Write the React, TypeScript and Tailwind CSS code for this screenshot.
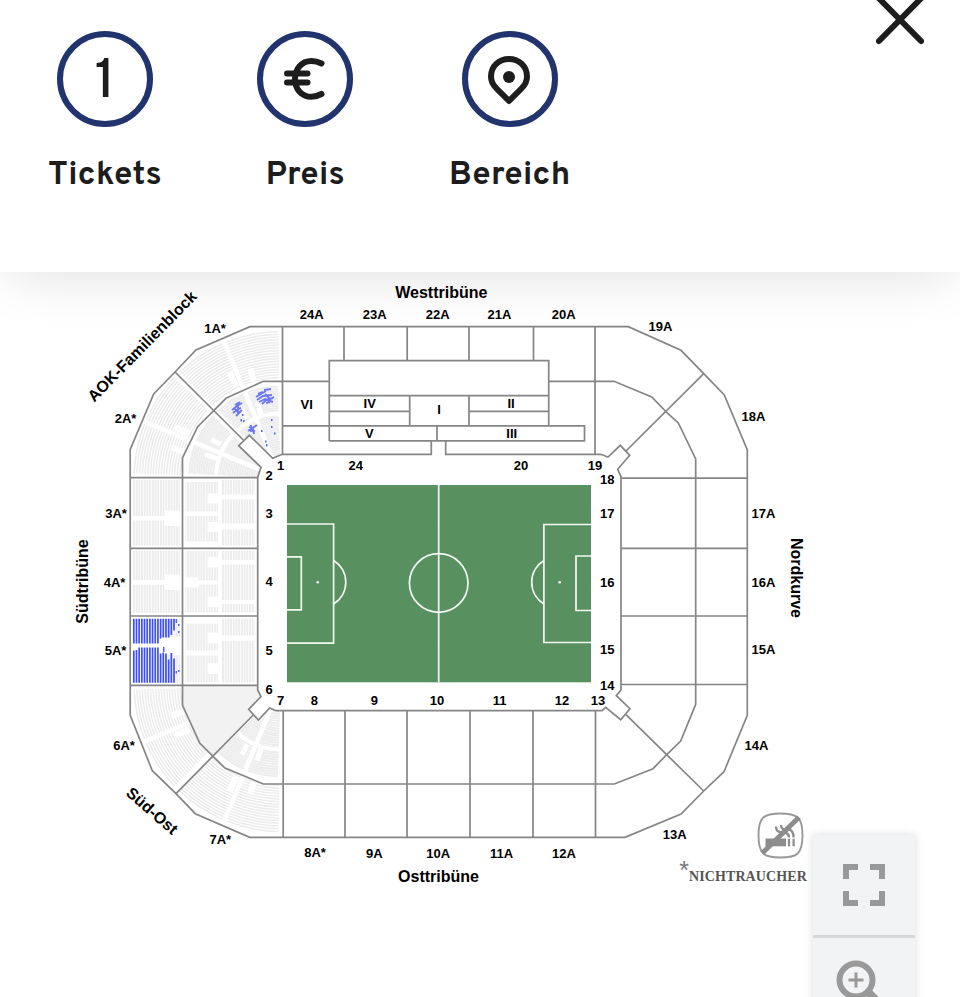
import type { ReactNode } from 'react';

type Label = { text: string; x: number; y: number; rotate?: number };
type Block = [x1: number, y1: number, x2: number, y2: number];

const titles: Label[] = [
  { text: 'Westtribüne', x: 441.3, y: 297.7 },
  { text: 'Osttribüne', x: 438.5, y: 881.7 },
  { text: 'Südtribüne', x: 88.3, y: 581.5, rotate: -90 },
  { text: 'Nordkurve', x: 791, y: 578, rotate: 90 },
  { text: 'AOK-Familienblock', x: 146, y: 350, rotate: -45.5 },
  { text: 'Süd-Ost', x: 148.5, y: 815, rotate: 41 },
];

const labels: Label[] = [
  { text: '24A', x: 311.7, y: 318.5 },
  { text: '23A', x: 374.7, y: 318.5 },
  { text: '22A', x: 437.7, y: 318.5 },
  { text: '21A', x: 499.5, y: 318.5 },
  { text: '20A', x: 563.7, y: 318.5 },
  { text: '19A', x: 660.5, y: 330.5 },
  { text: '18A', x: 753.5, y: 421 },
  { text: '17A', x: 763.5, y: 517.5 },
  { text: '16A', x: 763.5, y: 586.5 },
  { text: '15A', x: 763.5, y: 653.5 },
  { text: '14A', x: 756.5, y: 750 },
  { text: '13A', x: 674.7, y: 838.5 },
  { text: '12A', x: 564, y: 857.5 },
  { text: '11A', x: 501.5, y: 857.5 },
  { text: '10A', x: 438.3, y: 857.5 },
  { text: '9A', x: 374.3, y: 857.5 },
  { text: '8A*', x: 315, y: 857 },
  { text: '7A*', x: 220.3, y: 843.5 },
  { text: '6A*', x: 124, y: 749.5 },
  { text: '5A*', x: 115.5, y: 654.5 },
  { text: '4A*', x: 114.5, y: 586.5 },
  { text: '3A*', x: 116, y: 517.5 },
  { text: '2A*', x: 125.5, y: 422.5 },
  { text: '1A*', x: 215, y: 333 },
  { text: 'VI', x: 306.7, y: 409 },
  { text: 'IV', x: 369.7, y: 408 },
  { text: 'I', x: 439, y: 414 },
  { text: 'II', x: 511, y: 408 },
  { text: 'V', x: 369.3, y: 437.5 },
  { text: 'III', x: 511.7, y: 437.5 },
  { text: '1', x: 280.5, y: 470 },
  { text: '24', x: 355.7, y: 470 },
  { text: '20', x: 521, y: 470 },
  { text: '19', x: 595, y: 470 },
  { text: '2', x: 269, y: 479.5 },
  { text: '3', x: 269, y: 517.5 },
  { text: '4', x: 269, y: 586 },
  { text: '5', x: 269, y: 655 },
  { text: '6', x: 269, y: 693.5 },
  { text: '7', x: 280.5, y: 705 },
  { text: '8', x: 314.3, y: 705 },
  { text: '9', x: 374.3, y: 705 },
  { text: '10', x: 437, y: 705 },
  { text: '11', x: 499.5, y: 705 },
  { text: '12', x: 562, y: 705 },
  { text: '13', x: 598, y: 705 },
  { text: '14', x: 607.3, y: 689.5 },
  { text: '15', x: 607.3, y: 653.5 },
  { text: '16', x: 607.3, y: 586.5 },
  { text: '17', x: 607.3, y: 517.5 },
  { text: '18', x: 607.3, y: 483.5 },
];

// seat areas of the straight south blocks
const seatBlocks: Block[] = [
  // 3A
  [133, 480, 164.5, 516], [133, 520.5, 164.5, 545.5], [164.5, 480, 180, 510.5], [164.5, 526, 180, 545.5],
  // 4A
  [133, 551, 164.5, 580], [133, 585, 164.5, 613], [164.5, 551, 180, 574.5], [164.5, 590, 180, 613],
  // 5A rest
  [160, 619, 180, 637], [164, 655, 180, 683],
  // 3
  [185.5, 482, 207.5, 511.5], [207.5, 482, 218, 493.5], [207.5, 503.5, 218, 511.5],
  [185.5, 516, 207.5, 541.5], [207.5, 516, 218, 522], [207.5, 532, 218, 541.5],
  [222, 480, 254.5, 494.5], [222, 499.5, 254.5, 523.5], [222, 529.5, 254.5, 545.5],
  // 4
  [185.5, 551, 207.5, 577.5], [185.5, 587.5, 207.5, 612.5], [198.5, 577.5, 218, 580.5], [198.5, 584.5, 218, 587.5],
  [207.5, 551, 218, 557], [207.5, 567.5, 218, 577.5], [207.5, 587.5, 218, 596.5], [207.5, 607, 218, 612.5],
  [222, 551, 254.5, 560], [222, 564.5, 254.5, 600], [222, 604, 254.5, 612.5],
  // 5
  [185.5, 623.5, 207.5, 650.5], [207.5, 623.5, 218, 632.5], [207.5, 643.5, 218, 650.5],
  [185.5, 655.5, 207.5, 682], [207.5, 655.5, 218, 663], [207.5, 674, 218, 682],
  [222, 618.5, 254.5, 635.5], [222, 641, 254.5, 682.5],
];

// bookable seats in 5A, one entry per seat row: end of the upper part, start of the lower part
const freeRows: [number, number][] = [
  [643.5, 650.5], [643.5, 650], [643.5, 647.5], [643.5, 647.5], [643.5, 647.5], [643.5, 647.5],
  [643.5, 647.5], [643.5, 647.5], [643.5, 647.5], [643.5, 647.5], [638.5, 653.5], [637.5, 652.5],
  [637.5, 653.5], [637.5, 659.5], [635, 653], [630.5, 658.5],
];

const freeDots: [number, number, number][] = [
  [163, 647, 5], [175.6, 619, 4], [178, 624, 2], [178, 631, 2], [175.5, 671, 2.5], [178, 670, 2],
  // block 1
  [271, 419, 2], [271, 426, 2], [274, 432.5, 2], [261, 430, 2], [265, 440.5, 2], [266, 444, 2.5],
  [242, 414, 2], [240.5, 419, 2.5], [243, 420, 2],
];

const outline = [
  // outer ring
  'M250 326.7H628.3L681 350.3L703.7 373.7L724.3 395L747.3 450V715.3L724 771.7L703.7 791L681 814L625 837.3H249.7L195.3 813.7L176 793.7L152.3 770.7L130.2 715.3V449.3L153.7 394L175 372L196 350Z',
  // ring between the tiers
  'M329.3 381.3H263.3L226 398.3L213 411.3L197.7 426.7L182.5 458V705.3L199.7 743L213.3 756.7L225 768L263.3 784H614.3L653 768.7L666.7 754.7L680.7 741L695.7 704.3V459L678.3 423L666.7 412.3L651.7 397L614 381.3H548.7',
  // inner edge with the four corner gates
  'M431.3 441V454.3H282.3L272.7 458.3L249.3 435.3L238.7 445.7L261 467.3L257.7 477.3V690L261 696.7L248.7 709.3L258.3 720L269.7 708L276 710.7H602L605.7 707.3L620.7 719.7L630 708.7L616.3 695.7L621 690V476.7L617.7 469.3L629.7 455.3L620.3 445.3L608 457L600.7 454.3H445.7V441',
  // diagonals
  'M175 372L243.3 440M703.7 373.7L626 451M703.7 791L626 714.7M176 793.7L253.3 715',
  // south and north rows
  'M130 477.6H257.7M130 548.3H257.7M130 616H257.7M130 685.3H257.7',
  'M621 478.2H747.3M621 548.3H747.3M621 616H747.3M621 684.5H747.3',
  // east columns
  'M283.2 710.7V837.3M345 710.7V837.3M407 710.7V837.3M470 710.7V837.3M533 710.7V837.3M595.5 710.7V837.3',
  // west columns
  'M282.5 326.7V454.3M344 326.7V360.6M407.2 326.7V360.6M469 326.7V360.6M533.5 326.7V360.6M595 326.7V454.3',
  'M329.3 441V360.6H548.7V425.7M329.3 395.6H548.7M329.3 411.3H409.7M469 411.3H548.7M409.7 395.6V425.7M469 395.6V425.7',
  'M282.5 425.8H584.5V440.8H329.3M437 425.8V440.8',
];

const ringRadii = Array.from({ length: 18 }, (_, i) => 101 + i * 2.7);
const tierRadii = Array.from({ length: 31 }, (_, i) => 20 + i * 2.4);

function arc(r: number, from: number, to: number) {
  const a = (from * Math.PI) / 180;
  const b = (to * Math.PI) / 180;
  return `M${-r * Math.cos(a)} ${-r * Math.sin(a)}A${r} ${r} 0 0 1 ${-r * Math.cos(b)} ${-r * Math.sin(b)}`;
}

// quarter of the stand, centred on its own origin and opening to the upper left
function CornerSeats({ transform }: { transform: string }) {
  return (
    <g transform={transform} fill="none">
      {ringRadii.map((r) => (
        <path key={r} d={arc(r, 2, 89)} stroke="#ececec" strokeWidth="1.5" />
      ))}
      {tierRadii.map((r) => (
        <path key={r} d={arc(r, 3, 88)} stroke="#ededed" strokeWidth="2.1" />
      ))}
      <g stroke="#fff">
        <path d={arc(65, 0, 90)} strokeWidth="4" />
        <path d="M0 0L-107 -107" strokeWidth="7" />
        <path d="M-8 -19L-60 -144M-19 -8L-144 -60" strokeWidth="4.5" />
        <path d="M-45 -92L-51 -106M-27 -97L-31 -110M-92 -45L-106 -51M-97 -27L-110 -31" strokeWidth="6" />
        <path d="M-34 -60L-39 -70M-20 -64L-24 -76M-60 -34L-70 -39M-64 -20L-76 -24" strokeWidth="5" />
      </g>
    </g>
  );
}

function Pitch() {
  return (
    <g>
      <rect x="287" y="485" width="304" height="197.3" fill="#58915f" />
      <g fill="none" stroke="#f4f8f4" strokeWidth="1.7">
        <path d="M438.7 485V682.3M287 524H333.6V643.2H287M287 556.8H301.3V609.8H287" />
        <path d="M591 524.5H543.9V642.5H591M591 556H576V610.5H591" />
        <path d="M333.6 560.5A25.5 25.5 0 0 1 333.6 604M543.9 560.5A25.5 25.5 0 0 0 543.9 604" />
        <circle cx="438.7" cy="583" r="29.3" />
      </g>
      <circle cx="317.7" cy="582.2" r="1.3" fill="#fff" />
      <circle cx="559.7" cy="582.2" r="1.3" fill="#fff" />
    </g>
  );
}

function NoSmoking() {
  return (
    <g fill="none" stroke="#8c8c8c">
      <path d="M780.5 813.5C797 813.5 802.5 817 802.5 835.5S797 857.5 780.5 857.5S758.5 854 758.5 835.5S764 813.5 780.5 813.5Z" stroke="#999" strokeWidth="1.9" />
      <path d="M765.5 838.5H786V846.3H765.5Z" fill="#8c8c8c" stroke="none" />
      <path d="M789 838.8V846.3M793.6 838.8V846.3" strokeWidth="2.2" />
      <path d="M776 826.5C776 831 779 832.5 783 832.5C787 832.5 789 834 789 837.5M781 825C781 829 784 830 787.5 829.5C792 829 793.6 833 793.6 837.5" strokeWidth="2.3" />
      <path d="M762.2 853.3L799 817.3" strokeWidth="5" />
    </g>
  );
}

function StadiumMap() {
  return (
    <svg viewBox="0 271 960 726" className="block h-[726px] w-full">
      <defs>
        <pattern id="rows" x="133" width="2.7" height="10" patternUnits="userSpaceOnUse">
          <rect width="1.9" height="10" fill="#ececec" />
        </pattern>
      </defs>

      <CornerSeats transform="translate(281 478.5)" />
      <CornerSeats transform="translate(281 684.5) scale(1 -1)" />
      <path d="M182.5 685.3V705.3L199.7 743L213.3 756.7L253.3 715L248.7 709.3L261 696.7L257.7 685.3Z" fill="#f2f2f2" />
      <path d="M249.3 435.3L238.7 445.7L261 467.3L258 477V480H283V454.3H281L272.7 458.3Z" fill="#fff" />
      <path d="M258 684V690L261 696.7L248.7 709.3L258.3 720L269.7 708L276 710.7H283V684Z" fill="#fff" />

      {seatBlocks.map(([x1, y1, x2, y2]) => (
        <rect key={`${x1}-${y1}`} x={x1} y={y1} width={x2 - x1} height={y2 - y1} fill="url(#rows)" />
      ))}

      <g stroke="#3d4ffa" strokeWidth="1.7" fill="none">
        {freeRows.map(([top, bottom], i) => (
          <path key={i} d={`M${133.8 + i * 2.68} 618.8V${top}M${133.8 + i * 2.68} ${bottom}V682.8`} />
        ))}
      </g>
      <g fill="#5468f5">
        {freeDots.map(([x, y, h]) => (
          <rect key={`${x}-${y}`} x={x} y={y} width="1.5" height={h} />
        ))}
      </g>
      <g fill="none" stroke="#6b78f2" strokeWidth="1.9">
        <path d="M256 397L261 394L266 391M257 400L263 396L272 395M258 394L263 392M259 402L265 399L273 402M265 394L270 399L274 397M262 404L266 400L273 398M264 390L271 389M266 403L270 402" />
        <path d="M232 410L237 406L242 403M233 413L238 409L241 408M235 405L240 402M236 416L240 412L242 410M238 404V415M234 408L238 412" />
        <path d="M248 431L257 425M249 427L253 429L254 434M251 432V425M250 430L255 431" />
      </g>

      <g fill="none" stroke="#858585" strokeWidth="1.7">
        {outline.map((d) => (
          <path key={d} d={d} />
        ))}
      </g>

      <Pitch />

      <g className="font-['Liberation_Sans',Arial,sans-serif] font-bold" fill="#000" textAnchor="middle">
        {titles.map((t) => (
          <text key={t.text} x={t.x} y={t.y} fontSize="16" transform={t.rotate ? `rotate(${t.rotate} ${t.x} ${t.y})` : undefined}>
            {t.text}
          </text>
        ))}
        {labels.map((t) => (
          <text key={t.text} x={t.x} y={t.y} fontSize="13">
            {t.text}
          </text>
        ))}
        <text x="684" y="879" fontSize="25" fill="#777" className="font-normal">*</text>
      </g>

      <text x="689" y="881" fontSize="14" letterSpacing="0.1" fill="#555" className="font-['Liberation_Serif',serif] font-bold">
        NICHTRAUCHER
      </text>
      <NoSmoking />
    </svg>
  );
}

function FilterButton({ label, children }: { label: string; children: ReactNode }) {
  return (
    <button className="flex flex-col items-center text-[#1d1d1d]">
      <span className="flex size-24 items-center justify-center rounded-full border-[6px] border-[#22346e]">{children}</span>
      <span className="mt-7 font-['Overpass','Roboto',sans-serif] text-[33px] leading-[42px] font-bold tracking-[0.3px]">{label}</span>
    </button>
  );
}

function App() {
  return (
    <div className="relative h-[997px] w-[960px] overflow-hidden bg-white">
      <header className="relative z-10 flex h-[271.5px] items-start justify-between bg-white pr-9 pl-12 shadow-[0_10px_54px_-8px_rgba(0,0,0,0.13)]">
        <div className="flex gap-[95.5px] pt-[31.4px]">
          <FilterButton label="Tickets">
            <span className="pt-2 font-['Overpass','Roboto',sans-serif] text-[55px] leading-none font-medium">1</span>
          </FilterButton>
          <FilterButton label="Preis">
            <svg viewBox="0 0 42 44" className="h-11 w-[42px]" fill="none" stroke="currentColor" strokeWidth="6" strokeLinecap="round">
              <path d="M37.5 6.5C34 4.7 31 4 27.5 4C17.5 4 11 12 11 22S17.5 39.8 27.5 39.8C31 39.8 34 38.8 37.5 37M3 16.5H23.5M3 25.5H23.5" />
            </svg>
          </FilterButton>
          <FilterButton label="Bereich">
            <svg viewBox="0 0 42 50" className="mt-px mr-0.5 h-[50px] w-[42px]" fill="none" stroke="currentColor" strokeWidth="6" strokeLinejoin="round">
              <path d="M21 46L8.5 33.5C5 30 3 26 3 21.5C3 11 11 4 21 4S39 11 39 21.5C39 26 37 30 33.5 33.5Z" />
              <circle cx="21" cy="22" r="6" fill="currentColor" stroke="none" />
            </svg>
          </FilterButton>
        </div>
        <button aria-label="Schließen" className="text-[#1d1d1d]">
          <svg viewBox="0 0 48 46" className="block h-[46px] w-12" fill="none" stroke="currentColor" strokeWidth="6" strokeLinecap="round">
            <path d="M3 41L45 -1.5M3 -1.5L45 41" />
          </svg>
        </button>
      </header>

      <main className="-mt-[0.5px]">
        <StadiumMap />
      </main>

      <div className="absolute top-[835px] left-[813px] flex w-[102px] flex-col bg-[#f2f3f5] text-[#999] shadow-[0_0_8px_rgba(0,0,0,0.14)]">
        <button className="flex h-[103px] items-center justify-center border-b-[3px] border-[#d6d8da]">
          <svg viewBox="0 0 42 42" className="size-[42px]" fill="none" stroke="currentColor" strokeWidth="6">
            <path d="M3 15V3H15M27 3H39V15M39 27V39H27M15 39H3V27" />
          </svg>
        </button>
        <button className="flex h-[102px] justify-center pt-[22px]">
          <svg viewBox="0 0 56 56" className="size-14" fill="none" stroke="currentColor">
            <circle cx="20" cy="20" r="16.5" strokeWidth="6" />
            <path d="M12.5 20H27.5M20 12.5V27.5" strokeWidth="3" />
            <path d="M32 32L50 50" strokeWidth="8" />
          </svg>
        </button>
      </div>
    </div>
  );
}

export default App;
